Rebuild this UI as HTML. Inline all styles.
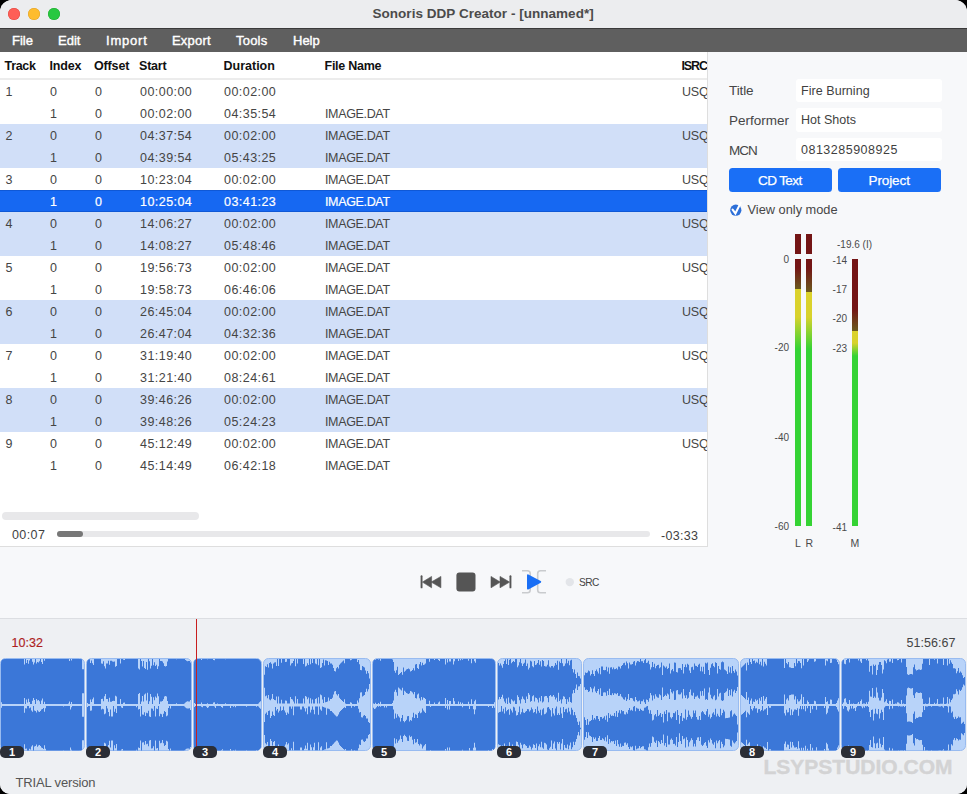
<!DOCTYPE html><html><head><meta charset="utf-8"><style>
*{margin:0;padding:0;box-sizing:border-box}
html,body{width:967px;height:794px;overflow:hidden;background:#000}
body{font-family:"Liberation Sans", sans-serif;position:relative}
.win{position:absolute;left:0;top:0;width:967px;height:794px;border-radius:12px 12px 10px 10px;overflow:hidden;background:#f7f8fa}
.a{position:absolute;white-space:nowrap}
</style></head><body><div class="win"><div class="a" style="left:0;top:0;width:967px;height:28px;background:#ecedef"></div><div class="a" style="left:8px;top:7.6px;width:12px;height:12px;border-radius:50%;background:#fe5f57;box-shadow:inset 0 0 0 0.5px #e2463f"></div><div class="a" style="left:28px;top:7.6px;width:12px;height:12px;border-radius:50%;background:#febc2e;box-shadow:inset 0 0 0 0.5px #e0a126"></div><div class="a" style="left:48px;top:7.6px;width:12px;height:12px;border-radius:50%;background:#28c840;box-shadow:inset 0 0 0 0.5px #1eab2d"></div><div class="a" style="left:372.5px;top:6.87px;font-size:13.5px;line-height:13.5px;color:#4b4b4b;font-weight:bold;letter-spacing:0.03px;">Sonoris DDP Creator - [unnamed*]</div><div class="a" style="left:0;top:28px;width:967px;height:24px;background:#5f5f5f;border-top:1.5px solid #3a3a3a"></div><div class="a" style="left:12px;top:34.20px;font-size:13px;line-height:13px;color:#fff;font-weight:normal;letter-spacing:0px;-webkit-text-stroke:0.4px #fff;">File</div><div class="a" style="left:58px;top:34.20px;font-size:13px;line-height:13px;color:#fff;font-weight:normal;letter-spacing:0px;-webkit-text-stroke:0.4px #fff;">Edit</div><div class="a" style="left:106px;top:34.20px;font-size:13px;line-height:13px;color:#fff;font-weight:normal;letter-spacing:0.8px;-webkit-text-stroke:0.4px #fff;">Import</div><div class="a" style="left:172px;top:34.20px;font-size:13px;line-height:13px;color:#fff;font-weight:normal;letter-spacing:0.2px;-webkit-text-stroke:0.4px #fff;">Export</div><div class="a" style="left:236px;top:34.20px;font-size:13px;line-height:13px;color:#fff;font-weight:normal;letter-spacing:0.2px;-webkit-text-stroke:0.4px #fff;">Tools</div><div class="a" style="left:293px;top:34.20px;font-size:13px;line-height:13px;color:#fff;font-weight:normal;letter-spacing:0px;-webkit-text-stroke:0.4px #fff;">Help</div><div class="a" style="left:0;top:52px;width:708px;height:495px;background:#fff;border-right:1px solid #dedede;border-bottom:1px solid #dedede"></div><div class="a" style="left:4.5px;top:59.62px;font-size:12.5px;line-height:12.5px;color:#111;font-weight:bold;letter-spacing:-0.3px;">Track</div><div class="a" style="left:49.5px;top:59.62px;font-size:12.5px;line-height:12.5px;color:#111;font-weight:bold;letter-spacing:-0.2px;">Index</div><div class="a" style="left:94px;top:59.62px;font-size:12.5px;line-height:12.5px;color:#111;font-weight:bold;letter-spacing:-0.15px;">Offset</div><div class="a" style="left:139px;top:59.62px;font-size:12.5px;line-height:12.5px;color:#111;font-weight:bold;letter-spacing:-0.2px;">Start</div><div class="a" style="left:223.5px;top:59.62px;font-size:12.5px;line-height:12.5px;color:#111;font-weight:bold;letter-spacing:0px;">Duration</div><div class="a" style="left:324.5px;top:59.62px;font-size:12.5px;line-height:12.5px;color:#111;font-weight:bold;letter-spacing:-0.25px;">File Name</div><div class="a" style="left:681.5px;top:59.62px;font-size:12.5px;line-height:12.5px;color:#111;font-weight:bold;letter-spacing:-1.1px;">ISRC</div><div class="a" style="left:0;top:78px;width:707px;height:2px;background:#ececec"></div><div class="a" style="left:5.5px;top:85.62px;font-size:12.5px;line-height:12.5px;color:#454545;font-weight:normal;letter-spacing:0.4px;">1</div><div class="a" style="left:50px;top:85.62px;font-size:12.5px;line-height:12.5px;color:#454545;font-weight:normal;letter-spacing:0.4px;">0</div><div class="a" style="left:95px;top:85.62px;font-size:12.5px;line-height:12.5px;color:#454545;font-weight:normal;letter-spacing:0.4px;">0</div><div class="a" style="left:140px;top:85.62px;font-size:12.5px;line-height:12.5px;color:#454545;font-weight:normal;letter-spacing:0.45px;">00:00:00</div><div class="a" style="left:224px;top:85.62px;font-size:12.5px;line-height:12.5px;color:#454545;font-weight:normal;letter-spacing:0.45px;">00:02:00</div><div class="a" style="left:682px;top:85.62px;font-size:12.5px;line-height:12.5px;color:#454545;font-weight:normal;letter-spacing:-0.2px;">USQ</div><div class="a" style="left:50px;top:107.62px;font-size:12.5px;line-height:12.5px;color:#454545;font-weight:normal;letter-spacing:0.4px;">1</div><div class="a" style="left:95px;top:107.62px;font-size:12.5px;line-height:12.5px;color:#454545;font-weight:normal;letter-spacing:0.4px;">0</div><div class="a" style="left:140px;top:107.62px;font-size:12.5px;line-height:12.5px;color:#454545;font-weight:normal;letter-spacing:0.45px;">00:02:00</div><div class="a" style="left:224px;top:107.62px;font-size:12.5px;line-height:12.5px;color:#454545;font-weight:normal;letter-spacing:0.45px;">04:35:54</div><div class="a" style="left:325px;top:107.62px;font-size:12.5px;line-height:12.5px;color:#454545;font-weight:normal;letter-spacing:-0.35px;">IMAGE.DAT</div><div class="a" style="left:0;top:124px;width:707px;height:22px;background:#d1dff8"></div><div class="a" style="left:5.5px;top:129.62px;font-size:12.5px;line-height:12.5px;color:#454545;font-weight:normal;letter-spacing:0.4px;">2</div><div class="a" style="left:50px;top:129.62px;font-size:12.5px;line-height:12.5px;color:#454545;font-weight:normal;letter-spacing:0.4px;">0</div><div class="a" style="left:95px;top:129.62px;font-size:12.5px;line-height:12.5px;color:#454545;font-weight:normal;letter-spacing:0.4px;">0</div><div class="a" style="left:140px;top:129.62px;font-size:12.5px;line-height:12.5px;color:#454545;font-weight:normal;letter-spacing:0.45px;">04:37:54</div><div class="a" style="left:224px;top:129.62px;font-size:12.5px;line-height:12.5px;color:#454545;font-weight:normal;letter-spacing:0.45px;">00:02:00</div><div class="a" style="left:325px;top:129.62px;font-size:12.5px;line-height:12.5px;color:#454545;font-weight:normal;letter-spacing:-0.35px;">IMAGE.DAT</div><div class="a" style="left:682px;top:129.62px;font-size:12.5px;line-height:12.5px;color:#454545;font-weight:normal;letter-spacing:-0.2px;">USQ</div><div class="a" style="left:0;top:146px;width:707px;height:22px;background:#d1dff8"></div><div class="a" style="left:50px;top:151.62px;font-size:12.5px;line-height:12.5px;color:#454545;font-weight:normal;letter-spacing:0.4px;">1</div><div class="a" style="left:95px;top:151.62px;font-size:12.5px;line-height:12.5px;color:#454545;font-weight:normal;letter-spacing:0.4px;">0</div><div class="a" style="left:140px;top:151.62px;font-size:12.5px;line-height:12.5px;color:#454545;font-weight:normal;letter-spacing:0.45px;">04:39:54</div><div class="a" style="left:224px;top:151.62px;font-size:12.5px;line-height:12.5px;color:#454545;font-weight:normal;letter-spacing:0.45px;">05:43:25</div><div class="a" style="left:325px;top:151.62px;font-size:12.5px;line-height:12.5px;color:#454545;font-weight:normal;letter-spacing:-0.35px;">IMAGE.DAT</div><div class="a" style="left:5.5px;top:173.62px;font-size:12.5px;line-height:12.5px;color:#454545;font-weight:normal;letter-spacing:0.4px;">3</div><div class="a" style="left:50px;top:173.62px;font-size:12.5px;line-height:12.5px;color:#454545;font-weight:normal;letter-spacing:0.4px;">0</div><div class="a" style="left:95px;top:173.62px;font-size:12.5px;line-height:12.5px;color:#454545;font-weight:normal;letter-spacing:0.4px;">0</div><div class="a" style="left:140px;top:173.62px;font-size:12.5px;line-height:12.5px;color:#454545;font-weight:normal;letter-spacing:0.45px;">10:23:04</div><div class="a" style="left:224px;top:173.62px;font-size:12.5px;line-height:12.5px;color:#454545;font-weight:normal;letter-spacing:0.45px;">00:02:00</div><div class="a" style="left:325px;top:173.62px;font-size:12.5px;line-height:12.5px;color:#454545;font-weight:normal;letter-spacing:-0.35px;">IMAGE.DAT</div><div class="a" style="left:682px;top:173.62px;font-size:12.5px;line-height:12.5px;color:#454545;font-weight:normal;letter-spacing:-0.2px;">USQ</div><div class="a" style="left:0;top:190px;width:707px;height:22px;background:#1668f2;box-shadow:inset 0 1px 0 #0f58d6,inset 0 -1px 0 #0f58d6"></div><div class="a" style="left:50px;top:195.62px;font-size:12.5px;line-height:12.5px;color:#fff;font-weight:normal;letter-spacing:0.4px;-webkit-text-stroke:0.2px #fff;">1</div><div class="a" style="left:95px;top:195.62px;font-size:12.5px;line-height:12.5px;color:#fff;font-weight:normal;letter-spacing:0.4px;-webkit-text-stroke:0.2px #fff;">0</div><div class="a" style="left:140px;top:195.62px;font-size:12.5px;line-height:12.5px;color:#fff;font-weight:normal;letter-spacing:0.45px;-webkit-text-stroke:0.2px #fff;">10:25:04</div><div class="a" style="left:224px;top:195.62px;font-size:12.5px;line-height:12.5px;color:#fff;font-weight:normal;letter-spacing:0.45px;-webkit-text-stroke:0.2px #fff;">03:41:23</div><div class="a" style="left:325px;top:195.62px;font-size:12.5px;line-height:12.5px;color:#fff;font-weight:normal;letter-spacing:-0.35px;-webkit-text-stroke:0.2px #fff;">IMAGE.DAT</div><div class="a" style="left:0;top:212px;width:707px;height:22px;background:#d1dff8"></div><div class="a" style="left:5.5px;top:217.62px;font-size:12.5px;line-height:12.5px;color:#454545;font-weight:normal;letter-spacing:0.4px;">4</div><div class="a" style="left:50px;top:217.62px;font-size:12.5px;line-height:12.5px;color:#454545;font-weight:normal;letter-spacing:0.4px;">0</div><div class="a" style="left:95px;top:217.62px;font-size:12.5px;line-height:12.5px;color:#454545;font-weight:normal;letter-spacing:0.4px;">0</div><div class="a" style="left:140px;top:217.62px;font-size:12.5px;line-height:12.5px;color:#454545;font-weight:normal;letter-spacing:0.45px;">14:06:27</div><div class="a" style="left:224px;top:217.62px;font-size:12.5px;line-height:12.5px;color:#454545;font-weight:normal;letter-spacing:0.45px;">00:02:00</div><div class="a" style="left:325px;top:217.62px;font-size:12.5px;line-height:12.5px;color:#454545;font-weight:normal;letter-spacing:-0.35px;">IMAGE.DAT</div><div class="a" style="left:682px;top:217.62px;font-size:12.5px;line-height:12.5px;color:#454545;font-weight:normal;letter-spacing:-0.2px;">USQ</div><div class="a" style="left:0;top:234px;width:707px;height:22px;background:#d1dff8"></div><div class="a" style="left:50px;top:239.62px;font-size:12.5px;line-height:12.5px;color:#454545;font-weight:normal;letter-spacing:0.4px;">1</div><div class="a" style="left:95px;top:239.62px;font-size:12.5px;line-height:12.5px;color:#454545;font-weight:normal;letter-spacing:0.4px;">0</div><div class="a" style="left:140px;top:239.62px;font-size:12.5px;line-height:12.5px;color:#454545;font-weight:normal;letter-spacing:0.45px;">14:08:27</div><div class="a" style="left:224px;top:239.62px;font-size:12.5px;line-height:12.5px;color:#454545;font-weight:normal;letter-spacing:0.45px;">05:48:46</div><div class="a" style="left:325px;top:239.62px;font-size:12.5px;line-height:12.5px;color:#454545;font-weight:normal;letter-spacing:-0.35px;">IMAGE.DAT</div><div class="a" style="left:5.5px;top:261.62px;font-size:12.5px;line-height:12.5px;color:#454545;font-weight:normal;letter-spacing:0.4px;">5</div><div class="a" style="left:50px;top:261.62px;font-size:12.5px;line-height:12.5px;color:#454545;font-weight:normal;letter-spacing:0.4px;">0</div><div class="a" style="left:95px;top:261.62px;font-size:12.5px;line-height:12.5px;color:#454545;font-weight:normal;letter-spacing:0.4px;">0</div><div class="a" style="left:140px;top:261.62px;font-size:12.5px;line-height:12.5px;color:#454545;font-weight:normal;letter-spacing:0.45px;">19:56:73</div><div class="a" style="left:224px;top:261.62px;font-size:12.5px;line-height:12.5px;color:#454545;font-weight:normal;letter-spacing:0.45px;">00:02:00</div><div class="a" style="left:325px;top:261.62px;font-size:12.5px;line-height:12.5px;color:#454545;font-weight:normal;letter-spacing:-0.35px;">IMAGE.DAT</div><div class="a" style="left:682px;top:261.62px;font-size:12.5px;line-height:12.5px;color:#454545;font-weight:normal;letter-spacing:-0.2px;">USQ</div><div class="a" style="left:50px;top:283.62px;font-size:12.5px;line-height:12.5px;color:#454545;font-weight:normal;letter-spacing:0.4px;">1</div><div class="a" style="left:95px;top:283.62px;font-size:12.5px;line-height:12.5px;color:#454545;font-weight:normal;letter-spacing:0.4px;">0</div><div class="a" style="left:140px;top:283.62px;font-size:12.5px;line-height:12.5px;color:#454545;font-weight:normal;letter-spacing:0.45px;">19:58:73</div><div class="a" style="left:224px;top:283.62px;font-size:12.5px;line-height:12.5px;color:#454545;font-weight:normal;letter-spacing:0.45px;">06:46:06</div><div class="a" style="left:325px;top:283.62px;font-size:12.5px;line-height:12.5px;color:#454545;font-weight:normal;letter-spacing:-0.35px;">IMAGE.DAT</div><div class="a" style="left:0;top:300px;width:707px;height:22px;background:#d1dff8"></div><div class="a" style="left:5.5px;top:305.62px;font-size:12.5px;line-height:12.5px;color:#454545;font-weight:normal;letter-spacing:0.4px;">6</div><div class="a" style="left:50px;top:305.62px;font-size:12.5px;line-height:12.5px;color:#454545;font-weight:normal;letter-spacing:0.4px;">0</div><div class="a" style="left:95px;top:305.62px;font-size:12.5px;line-height:12.5px;color:#454545;font-weight:normal;letter-spacing:0.4px;">0</div><div class="a" style="left:140px;top:305.62px;font-size:12.5px;line-height:12.5px;color:#454545;font-weight:normal;letter-spacing:0.45px;">26:45:04</div><div class="a" style="left:224px;top:305.62px;font-size:12.5px;line-height:12.5px;color:#454545;font-weight:normal;letter-spacing:0.45px;">00:02:00</div><div class="a" style="left:325px;top:305.62px;font-size:12.5px;line-height:12.5px;color:#454545;font-weight:normal;letter-spacing:-0.35px;">IMAGE.DAT</div><div class="a" style="left:682px;top:305.62px;font-size:12.5px;line-height:12.5px;color:#454545;font-weight:normal;letter-spacing:-0.2px;">USQ</div><div class="a" style="left:0;top:322px;width:707px;height:22px;background:#d1dff8"></div><div class="a" style="left:50px;top:327.62px;font-size:12.5px;line-height:12.5px;color:#454545;font-weight:normal;letter-spacing:0.4px;">1</div><div class="a" style="left:95px;top:327.62px;font-size:12.5px;line-height:12.5px;color:#454545;font-weight:normal;letter-spacing:0.4px;">0</div><div class="a" style="left:140px;top:327.62px;font-size:12.5px;line-height:12.5px;color:#454545;font-weight:normal;letter-spacing:0.45px;">26:47:04</div><div class="a" style="left:224px;top:327.62px;font-size:12.5px;line-height:12.5px;color:#454545;font-weight:normal;letter-spacing:0.45px;">04:32:36</div><div class="a" style="left:325px;top:327.62px;font-size:12.5px;line-height:12.5px;color:#454545;font-weight:normal;letter-spacing:-0.35px;">IMAGE.DAT</div><div class="a" style="left:5.5px;top:349.62px;font-size:12.5px;line-height:12.5px;color:#454545;font-weight:normal;letter-spacing:0.4px;">7</div><div class="a" style="left:50px;top:349.62px;font-size:12.5px;line-height:12.5px;color:#454545;font-weight:normal;letter-spacing:0.4px;">0</div><div class="a" style="left:95px;top:349.62px;font-size:12.5px;line-height:12.5px;color:#454545;font-weight:normal;letter-spacing:0.4px;">0</div><div class="a" style="left:140px;top:349.62px;font-size:12.5px;line-height:12.5px;color:#454545;font-weight:normal;letter-spacing:0.45px;">31:19:40</div><div class="a" style="left:224px;top:349.62px;font-size:12.5px;line-height:12.5px;color:#454545;font-weight:normal;letter-spacing:0.45px;">00:02:00</div><div class="a" style="left:325px;top:349.62px;font-size:12.5px;line-height:12.5px;color:#454545;font-weight:normal;letter-spacing:-0.35px;">IMAGE.DAT</div><div class="a" style="left:682px;top:349.62px;font-size:12.5px;line-height:12.5px;color:#454545;font-weight:normal;letter-spacing:-0.2px;">USQ</div><div class="a" style="left:50px;top:371.62px;font-size:12.5px;line-height:12.5px;color:#454545;font-weight:normal;letter-spacing:0.4px;">1</div><div class="a" style="left:95px;top:371.62px;font-size:12.5px;line-height:12.5px;color:#454545;font-weight:normal;letter-spacing:0.4px;">0</div><div class="a" style="left:140px;top:371.62px;font-size:12.5px;line-height:12.5px;color:#454545;font-weight:normal;letter-spacing:0.45px;">31:21:40</div><div class="a" style="left:224px;top:371.62px;font-size:12.5px;line-height:12.5px;color:#454545;font-weight:normal;letter-spacing:0.45px;">08:24:61</div><div class="a" style="left:325px;top:371.62px;font-size:12.5px;line-height:12.5px;color:#454545;font-weight:normal;letter-spacing:-0.35px;">IMAGE.DAT</div><div class="a" style="left:0;top:388px;width:707px;height:22px;background:#d1dff8"></div><div class="a" style="left:5.5px;top:393.62px;font-size:12.5px;line-height:12.5px;color:#454545;font-weight:normal;letter-spacing:0.4px;">8</div><div class="a" style="left:50px;top:393.62px;font-size:12.5px;line-height:12.5px;color:#454545;font-weight:normal;letter-spacing:0.4px;">0</div><div class="a" style="left:95px;top:393.62px;font-size:12.5px;line-height:12.5px;color:#454545;font-weight:normal;letter-spacing:0.4px;">0</div><div class="a" style="left:140px;top:393.62px;font-size:12.5px;line-height:12.5px;color:#454545;font-weight:normal;letter-spacing:0.45px;">39:46:26</div><div class="a" style="left:224px;top:393.62px;font-size:12.5px;line-height:12.5px;color:#454545;font-weight:normal;letter-spacing:0.45px;">00:02:00</div><div class="a" style="left:325px;top:393.62px;font-size:12.5px;line-height:12.5px;color:#454545;font-weight:normal;letter-spacing:-0.35px;">IMAGE.DAT</div><div class="a" style="left:682px;top:393.62px;font-size:12.5px;line-height:12.5px;color:#454545;font-weight:normal;letter-spacing:-0.2px;">USQ</div><div class="a" style="left:0;top:410px;width:707px;height:22px;background:#d1dff8"></div><div class="a" style="left:50px;top:415.62px;font-size:12.5px;line-height:12.5px;color:#454545;font-weight:normal;letter-spacing:0.4px;">1</div><div class="a" style="left:95px;top:415.62px;font-size:12.5px;line-height:12.5px;color:#454545;font-weight:normal;letter-spacing:0.4px;">0</div><div class="a" style="left:140px;top:415.62px;font-size:12.5px;line-height:12.5px;color:#454545;font-weight:normal;letter-spacing:0.45px;">39:48:26</div><div class="a" style="left:224px;top:415.62px;font-size:12.5px;line-height:12.5px;color:#454545;font-weight:normal;letter-spacing:0.45px;">05:24:23</div><div class="a" style="left:325px;top:415.62px;font-size:12.5px;line-height:12.5px;color:#454545;font-weight:normal;letter-spacing:-0.35px;">IMAGE.DAT</div><div class="a" style="left:5.5px;top:437.62px;font-size:12.5px;line-height:12.5px;color:#454545;font-weight:normal;letter-spacing:0.4px;">9</div><div class="a" style="left:50px;top:437.62px;font-size:12.5px;line-height:12.5px;color:#454545;font-weight:normal;letter-spacing:0.4px;">0</div><div class="a" style="left:95px;top:437.62px;font-size:12.5px;line-height:12.5px;color:#454545;font-weight:normal;letter-spacing:0.4px;">0</div><div class="a" style="left:140px;top:437.62px;font-size:12.5px;line-height:12.5px;color:#454545;font-weight:normal;letter-spacing:0.45px;">45:12:49</div><div class="a" style="left:224px;top:437.62px;font-size:12.5px;line-height:12.5px;color:#454545;font-weight:normal;letter-spacing:0.45px;">00:02:00</div><div class="a" style="left:325px;top:437.62px;font-size:12.5px;line-height:12.5px;color:#454545;font-weight:normal;letter-spacing:-0.35px;">IMAGE.DAT</div><div class="a" style="left:682px;top:437.62px;font-size:12.5px;line-height:12.5px;color:#454545;font-weight:normal;letter-spacing:-0.2px;">USQ</div><div class="a" style="left:50px;top:459.62px;font-size:12.5px;line-height:12.5px;color:#454545;font-weight:normal;letter-spacing:0.4px;">1</div><div class="a" style="left:95px;top:459.62px;font-size:12.5px;line-height:12.5px;color:#454545;font-weight:normal;letter-spacing:0.4px;">0</div><div class="a" style="left:140px;top:459.62px;font-size:12.5px;line-height:12.5px;color:#454545;font-weight:normal;letter-spacing:0.45px;">45:14:49</div><div class="a" style="left:224px;top:459.62px;font-size:12.5px;line-height:12.5px;color:#454545;font-weight:normal;letter-spacing:0.45px;">06:42:18</div><div class="a" style="left:325px;top:459.62px;font-size:12.5px;line-height:12.5px;color:#454545;font-weight:normal;letter-spacing:-0.35px;">IMAGE.DAT</div><div class="a" style="left:708px;top:52px;width:20px;height:494px;background:#f7f8fa"></div><div class="a" style="left:707px;top:52px;width:1px;height:495px;background:#dedede"></div><div class="a" style="left:2px;top:512px;width:197px;height:8px;border-radius:4px;background:#e8e8ea"></div><div class="a" style="left:12px;top:529.42px;font-size:12.5px;line-height:12.5px;color:#3f3f3f;font-weight:normal;letter-spacing:0.4px;">00:07</div><div class="a" style="left:57px;top:531px;width:593px;height:6px;border-radius:3px;background:#e8e8ea"></div><div class="a" style="left:57px;top:531px;width:26px;height:6px;border-radius:3px;background:#777"></div><div class="a" style="left:661px;top:529.82px;font-size:12.5px;line-height:12.5px;color:#3f3f3f;font-weight:normal;letter-spacing:0.3px;">-03:33</div><div class="a" style="left:729px;top:83.77px;font-size:13.5px;line-height:13.5px;color:#464646;font-weight:normal;letter-spacing:-0.1px;">Title</div><div class="a" style="left:729px;top:113.67px;font-size:13.5px;line-height:13.5px;color:#464646;font-weight:normal;letter-spacing:0px;">Performer</div><div class="a" style="left:729px;top:143.57px;font-size:13.5px;line-height:13.5px;color:#464646;font-weight:normal;letter-spacing:-1.0px;">MCN</div><div class="a" style="left:796px;top:78.5px;width:146px;height:23.3px;background:#fff;border-radius:3px"></div><div class="a" style="left:801px;top:84.52px;font-size:12.5px;line-height:12.5px;color:#3f3f3f;font-weight:normal;letter-spacing:0.05px;">Fire Burning</div><div class="a" style="left:796px;top:108.3px;width:146px;height:23.3px;background:#fff;border-radius:3px"></div><div class="a" style="left:801px;top:114.32px;font-size:12.5px;line-height:12.5px;color:#3f3f3f;font-weight:normal;letter-spacing:0px;">Hot Shots</div><div class="a" style="left:796px;top:138px;width:146px;height:23.3px;background:#fff;border-radius:3px"></div><div class="a" style="left:801px;top:144.02px;font-size:12.5px;line-height:12.5px;color:#3f3f3f;font-weight:normal;letter-spacing:0.5px;">0813285908925</div><div class="a" style="left:729px;top:168px;width:103px;height:23.6px;background:#1a6ff6;border-radius:3.5px"></div><div class="a" style="left:838px;top:168px;width:103px;height:23.6px;background:#1a6ff6;border-radius:3.5px"></div><div class="a" style="left:758px;top:173.77px;font-size:13.5px;line-height:13.5px;color:#fff;font-weight:normal;letter-spacing:-0.6px;-webkit-text-stroke:0.25px #fff;">CD Text</div><div class="a" style="left:868.5px;top:173.77px;font-size:13.5px;line-height:13.5px;color:#fff;font-weight:normal;letter-spacing:-0.1px;-webkit-text-stroke:0.25px #fff;">Project</div><svg class="a" style="left:728px;top:200px" width="16" height="17" viewBox="0 0 16 17"><circle cx="7.8" cy="10.2" r="5.6" fill="#2c6fd8"/><path d="M4.6 9.6 L7.4 13.4 L12.8 2.6" stroke="#fff" stroke-width="2.1" fill="none" stroke-linecap="round"/><path d="M4.9 9.9 L7.4 13 L12.9 2.4" stroke="#2c6fd8" stroke-width="0.9" fill="none" stroke-linecap="round" opacity="0"/></svg><div class="a" style="left:747.5px;top:204.06px;font-size:12.8px;line-height:12.8px;color:#464646;font-weight:normal;letter-spacing:0px;">View only mode</div><div class="a" style="left:795px;top:234px;width:6px;height:19.5px;background:#741515"></div><div class="a" style="left:806px;top:234px;width:6px;height:19.5px;background:#741515"></div><div class="a" style="left:795px;top:259px;width:6px;height:267px;background:linear-gradient(to bottom,#741515 0px,#741515 9px,#6b5a1d 30px,#dcd22b 30px,#d8d22c 58px,#35d334 90px,#35d334 100%)"></div><div class="a" style="left:806px;top:259px;width:6px;height:267px;background:linear-gradient(to bottom,#741515 0px,#741515 9px,#6b5a1d 33px,#dcd22b 33px,#d8d22c 58px,#35d334 90px,#35d334 100%)"></div><div class="a" style="left:852px;top:259px;width:6px;height:267px;background:linear-gradient(to bottom,#741515 0px,#741515 50px,#6b5a1d 72px,#dcd22b 72px,#d8d22c 84px,#35d334 97px,#35d334 100%)"></div><div class="a" style="left:769px;top:254.53px;font-size:10px;line-height:10px;color:#4a4a4a;font-weight:normal;letter-spacing:0px;width:20px;text-align:right;">0</div><div class="a" style="left:769px;top:343.24px;font-size:10px;line-height:10px;color:#4a4a4a;font-weight:normal;letter-spacing:0px;width:20px;text-align:right;">-20</div><div class="a" style="left:769px;top:433.14px;font-size:10px;line-height:10px;color:#4a4a4a;font-weight:normal;letter-spacing:0px;width:20px;text-align:right;">-40</div><div class="a" style="left:769px;top:522.13px;font-size:10px;line-height:10px;color:#4a4a4a;font-weight:normal;letter-spacing:0px;width:20px;text-align:right;">-60</div><div class="a" style="left:827px;top:255.84px;font-size:10px;line-height:10px;color:#4a4a4a;font-weight:normal;letter-spacing:0px;width:20px;text-align:right;">-14</div><div class="a" style="left:827px;top:284.54px;font-size:10px;line-height:10px;color:#4a4a4a;font-weight:normal;letter-spacing:0px;width:20px;text-align:right;">-17</div><div class="a" style="left:827px;top:313.54px;font-size:10px;line-height:10px;color:#4a4a4a;font-weight:normal;letter-spacing:0px;width:20px;text-align:right;">-20</div><div class="a" style="left:827px;top:344.04px;font-size:10px;line-height:10px;color:#4a4a4a;font-weight:normal;letter-spacing:0px;width:20px;text-align:right;">-23</div><div class="a" style="left:827px;top:522.74px;font-size:10px;line-height:10px;color:#4a4a4a;font-weight:normal;letter-spacing:0px;width:20px;text-align:right;">-41</div><div class="a" style="left:837px;top:239.84px;font-size:10px;line-height:10px;color:#4a4a4a;font-weight:normal;letter-spacing:0px;">-19.6 (I)</div><div class="a" style="left:795px;top:537.91px;font-size:10.5px;line-height:10.5px;color:#4a4a4a;font-weight:normal;letter-spacing:0px;">L</div><div class="a" style="left:805.5px;top:537.91px;font-size:10.5px;line-height:10.5px;color:#4a4a4a;font-weight:normal;letter-spacing:0px;">R</div><div class="a" style="left:850.5px;top:537.91px;font-size:10.5px;line-height:10.5px;color:#4a4a4a;font-weight:normal;letter-spacing:0px;">M</div><svg class="a" style="left:415px;top:565px" width="190" height="34" viewBox="415 565 190 34">
<rect x="420.6" y="575.3" width="1.9" height="13" rx="0.9" fill="#555"/>
<path d="M422.4 582.1 L431.6 576.4 L431.6 587.8 Z M431.2 582.1 L440.9 576.4 L440.9 587.8 Z" fill="#555" stroke="#555" stroke-width="0.6" stroke-linejoin="round"/>
<rect x="456.4" y="572.4" width="19.1" height="19" rx="3" fill="#555"/>
<path d="M491 576.4 L500.3 582.1 L491 587.8 Z M500 576.4 L509.6 582.1 L500 587.8 Z" fill="#555" stroke="#555" stroke-width="0.6" stroke-linejoin="round"/>
<rect x="509.5" y="575.3" width="1.9" height="13" rx="0.9" fill="#555"/>
<path d="M522 570.7 H527.4 Q530.2 570.7 530.2 573.5 V590 Q530.2 592.8 527.4 592.8 H522" stroke="#c9cbce" stroke-width="1.6" fill="none"/>
<path d="M546 570.7 H540.5 Q537.7 570.7 537.7 573.5 V590 Q537.7 592.8 540.5 592.8 H546" stroke="#c9cbce" stroke-width="1.6" fill="none"/>
<path d="M527.9 575.2 L540.3 581.9 L527.9 588.6 Z" fill="#1a6ff5" stroke="#1a6ff5" stroke-width="1.8" stroke-linejoin="round"/>
<circle cx="569.8" cy="582.1" r="4.2" fill="#e3e5e9"/>
</svg><div class="a" style="left:579px;top:577.67px;font-size:10.2px;line-height:10.2px;color:#444;font-weight:normal;letter-spacing:-0.6px;">SRC</div><div class="a" style="left:0;top:618px;width:967px;height:176px;background:#eef0f3;border-top:1px solid #dcdee2"></div><div class="a" style="left:11.5px;top:636.62px;font-size:12.5px;line-height:12.5px;color:#ad1e1e;font-weight:normal;letter-spacing:0.05px;-webkit-text-stroke:0.15px #ad1e1e;">10:32</div><div class="a" style="left:906.5px;top:637.22px;font-size:12.5px;line-height:12.5px;color:#444;font-weight:normal;letter-spacing:0.05px;">51:56:67</div><div class="a" style="left:15.5px;top:776.40px;font-size:13px;line-height:13px;color:#555;font-weight:normal;letter-spacing:-0.15px;">TRIAL version</div><div class="a" style="left:763.5px;top:756.22px;font-size:21px;line-height:21px;color:#d3d3d4;font-weight:bold;letter-spacing:0px;-webkit-text-stroke:0.4px #d3d3d4;">LSYPSTUDIO.COM</div><svg class="a" style="left:0;top:619px" width="967" height="146" viewBox="0 619 967 146"><defs><clipPath id="cp0"><rect x="1" y="659" width="83" height="91.5" rx="4"/></clipPath><clipPath id="cp1"><rect x="87" y="659" width="104" height="91.5" rx="4"/></clipPath><clipPath id="cp2"><rect x="194" y="659" width="67" height="91.5" rx="4"/></clipPath><clipPath id="cp3"><rect x="264" y="659" width="106" height="91.5" rx="4"/></clipPath><clipPath id="cp4"><rect x="373" y="659" width="122" height="91.5" rx="4"/></clipPath><clipPath id="cp5"><rect x="498" y="659" width="83" height="91.5" rx="4"/></clipPath><clipPath id="cp6"><rect x="584" y="659" width="154" height="91.5" rx="4"/></clipPath><clipPath id="cp7"><rect x="741" y="659" width="98" height="91.5" rx="4"/></clipPath><clipPath id="cp8"><rect x="842" y="659" width="123" height="91.5" rx="4"/></clipPath></defs><rect x="0.5" y="658.5" width="84" height="92" rx="5" fill="#b8d3f9" stroke="#98bbf0" stroke-width="1"/><path clip-path="url(#cp0)" fill="#3b77d8" d="M0,681.2V663.6H1V660.2H2V658.5H3V658.5H4V658.5H5V658.5H6V658.5H7V658.5H8V658.5H9V658.5H10V658.5H11V658.5H12V658.5H13V658.5H14V658.5H15V658.5H16V658.5H17V658.5H18V658.5H19V658.5H20V658.5H21V658.5H22V658.5H23V658.5H24V664.6H25V658.5H26V663.0H27V659.9H28V663.8H29V660.5H30V658.5H31V658.5H32V661.8H33V664.6H34V662.4H35V658.5H36V663.4H37V662.1H38V662.6H39V661.2H40V658.5H41V662.0H42V664.0H43V658.5H44V660.8H45V658.5H46V658.5H47V658.5H48V658.5H49V658.5H50V658.5H51V658.5H52V658.5H53V658.5H54V658.5H55V658.5H56V658.5H57V658.5H58V658.5H59V658.5H60V658.5H61V658.5H62V658.5H63V658.5H64V658.5H65V658.5H66V658.5H67V658.5H68V659.1H69V661.0H70V658.5H71V660.5H72V658.5H73V658.5H74V658.5H75V658.5H76V658.5H77V658.5H78V658.5H79V658.5H80V658.5H81V658.5H82V669.3H83V669.3H84V658.5H85V681.2V704.0H84V693.2H83V693.2H82V704.0H81V704.0H80V704.0H79V704.0H78V704.0H77V704.0H76V704.0H75V704.0H74V704.0H73V704.0H72V702.0H71V704.0H70V701.5H69V703.4H68V704.0H67V704.0H66V704.0H65V704.0H64V704.0H63V704.0H62V704.0H61V704.0H60V704.0H59V704.0H58V704.0H57V704.0H56V704.0H55V704.0H54V704.0H53V704.0H52V704.0H51V704.0H50V704.0H49V704.0H48V704.0H47V704.0H46V704.0H45V701.7H44V704.0H43V698.5H42V700.5H41V704.0H40V701.3H39V699.9H38V700.4H37V699.1H36V704.0H35V700.1H34V697.9H33V700.7H32V704.0H31V704.0H30V702.0H29V698.7H28V702.6H27V699.5H26V704.0H25V697.9H24V704.0H23V704.0H22V704.0H21V704.0H20V704.0H19V704.0H18V704.0H17V704.0H16V704.0H15V704.0H14V704.0H13V704.0H12V704.0H11V704.0H10V704.0H9V704.0H8V704.0H7V704.0H6V704.0H5V704.0H4V704.0H3V704.0H2V702.3H1V698.9H0ZM0,728.5V711.1H1V707.7H2V706.0H3V706.0H4V706.0H5V706.0H6V706.0H7V706.0H8V706.0H9V706.0H10V706.0H11V706.0H12V706.0H13V706.0H14V706.0H15V706.0H16V706.0H17V706.0H18V706.0H19V706.0H20V706.0H21V706.0H22V706.0H23V706.0H24V712.7H25V708.3H26V708.5H27V706.0H28V706.0H29V708.2H30V707.6H31V710.4H32V711.7H33V706.0H34V710.6H35V710.9H36V712.6H37V710.2H38V711.4H39V712.0H40V711.0H41V709.6H42V708.9H43V708.1H44V711.7H45V708.3H46V706.0H47V706.0H48V706.0H49V706.0H50V706.0H51V706.0H52V706.0H53V706.0H54V706.0H55V706.0H56V706.0H57V706.0H58V706.0H59V706.0H60V706.0H61V706.0H62V706.0H63V706.6H64V706.0H65V706.0H66V706.0H67V706.0H68V706.0H69V706.0H70V709.4H71V707.3H72V706.0H73V706.0H74V706.0H75V706.0H76V706.0H77V706.0H78V706.0H79V706.0H80V706.0H81V706.0H82V716.7H83V716.7H84V706.0H85V728.5V751.0H84V740.3H83V740.3H82V751.0H81V751.0H80V751.0H79V751.0H78V751.0H77V751.0H76V751.0H75V751.0H74V751.0H73V751.0H72V749.7H71V747.6H70V751.0H69V751.0H68V751.0H67V751.0H66V751.0H65V751.0H64V750.4H63V751.0H62V751.0H61V751.0H60V751.0H59V751.0H58V751.0H57V751.0H56V751.0H55V751.0H54V751.0H53V751.0H52V751.0H51V751.0H50V751.0H49V751.0H48V751.0H47V751.0H46V748.7H45V745.3H44V748.9H43V748.1H42V747.4H41V746.0H40V745.0H39V745.6H38V746.8H37V744.4H36V746.1H35V746.4H34V751.0H33V745.3H32V746.6H31V749.4H30V748.8H29V751.0H28V751.0H27V748.5H26V748.7H25V744.3H24V751.0H23V751.0H22V751.0H21V751.0H20V751.0H19V751.0H18V751.0H17V751.0H16V751.0H15V751.0H14V751.0H13V751.0H12V751.0H11V751.0H10V751.0H9V751.0H8V751.0H7V751.0H6V751.0H5V751.0H4V751.0H3V751.0H2V749.3H1V745.9H0Z"/><rect x="86.5" y="658.5" width="105" height="92" rx="5" fill="#b8d3f9" stroke="#98bbf0" stroke-width="1"/><path clip-path="url(#cp1)" fill="#3b77d8" d="M86,681.2V661.9H87V659.6H88V658.5H89V658.5H90V663.1H91V660.6H92V663.3H93V665.1H94V658.5H95V658.5H96V658.5H97V658.5H98V658.5H99V658.5H100V658.5H101V663.6H102V663.8H103V661.3H104V666.3H105V668.5H106V663.4H107V663.6H108V660.8H109V664.8H110V660.8H111V660.8H112V661.6H113V661.8H114V661.6H115V666.8H116V666.0H117V658.5H118V658.5H119V658.5H120V663.4H121V658.5H122V658.5H123V659.8H124V659.9H125V658.5H126V658.5H127V658.5H128V658.5H129V658.5H130V658.5H131V658.5H132V658.5H133V658.5H134V658.5H135V658.5H136V658.5H137V658.5H138V668.6H139V669.4H140V658.5H141V661.0H142V666.4H143V661.0H144V667.9H145V669.1H146V661.9H147V669.7H148V658.5H149V661.2H150V668.6H151V665.8H152V658.5H153V665.2H154V662.2H155V666.1H156V664.8H157V669.1H158V666.3H159V658.5H160V661.0H161V661.0H162V661.4H163V663.3H164V666.1H165V666.4H166V666.1H167V661.4H168V658.5H169V658.5H170V658.5H171V658.5H172V658.5H173V658.5H174V658.5H175V658.5H176V659.2H177V658.5H178V658.5H179V658.5H180V658.5H181V658.5H182V658.5H183V658.5H184V659.0H185V659.9H186V660.8H187V661.2H188V661.0H189V660.9H190V662.5H191V665.9H192V681.2V696.6H191V700.0H190V701.6H189V701.5H188V701.3H187V701.7H186V702.6H185V703.5H184V704.0H183V704.0H182V704.0H181V704.0H180V704.0H179V704.0H178V704.0H177V703.3H176V704.0H175V704.0H174V704.0H173V704.0H172V704.0H171V704.0H170V704.0H169V704.0H168V701.1H167V696.4H166V696.1H165V696.4H164V699.2H163V701.1H162V701.5H161V701.5H160V704.0H159V696.2H158V693.4H157V697.7H156V696.4H155V700.3H154V697.3H153V704.0H152V696.7H151V693.9H150V701.3H149V704.0H148V692.8H147V700.6H146V693.4H145V694.6H144V701.5H143V696.1H142V701.5H141V704.0H140V693.1H139V693.9H138V704.0H137V704.0H136V704.0H135V704.0H134V704.0H133V704.0H132V704.0H131V704.0H130V704.0H129V704.0H128V704.0H127V704.0H126V704.0H125V702.6H124V702.7H123V704.0H122V704.0H121V699.1H120V704.0H119V704.0H118V704.0H117V696.5H116V695.7H115V700.9H114V700.7H113V700.9H112V701.7H111V701.7H110V697.7H109V701.7H108V698.9H107V699.1H106V694.0H105V696.2H104V701.2H103V698.7H102V698.9H101V704.0H100V704.0H99V704.0H98V704.0H97V704.0H96V704.0H95V704.0H94V697.4H93V699.2H92V701.9H91V699.4H90V704.0H89V704.0H88V702.9H87V700.6H86ZM86,728.5V709.4H87V707.1H88V706.0H89V706.0H90V710.7H91V710.4H92V706.0H93V706.0H94V706.0H95V706.0H96V706.0H97V706.0H98V706.0H99V706.0H100V706.0H101V709.5H102V708.7H103V709.3H104V714.2H105V713.5H106V706.0H107V708.4H108V712.1H109V716.3H110V709.6H111V716.5H112V716.5H113V706.0H114V711.7H115V708.8H116V713.0H117V706.0H118V706.0H119V706.0H120V706.0H121V707.5H122V708.0H123V706.0H124V706.0H125V706.0H126V706.0H127V706.0H128V706.0H129V706.0H130V706.0H131V706.0H132V706.0H133V706.0H134V706.0H135V706.0H136V707.3H137V706.0H138V709.4H139V709.1H140V716.4H141V706.0H142V714.5H143V714.7H144V712.2H145V716.0H146V712.8H147V713.3H148V710.7H149V716.5H150V717.0H151V708.5H152V708.7H153V710.7H154V706.0H155V716.6H156V708.5H157V708.9H158V706.0H159V716.3H160V713.8H161V714.2H162V716.9H163V713.7H164V711.0H165V712.1H166V716.3H167V715.6H168V707.9H169V706.0H170V708.4H171V706.0H172V706.0H173V706.0H174V706.0H175V706.0H176V706.0H177V706.0H178V706.0H179V706.0H180V706.0H181V706.0H182V706.0H183V706.0H184V706.5H185V707.4H186V708.2H187V708.6H188V708.5H189V708.3H190V709.9H191V713.3H192V728.5V743.7H191V747.1H190V748.7H189V748.5H188V748.4H187V748.8H186V749.6H185V750.5H184V751.0H183V751.0H182V751.0H181V751.0H180V751.0H179V751.0H178V751.0H177V751.0H176V751.0H175V751.0H174V751.0H173V751.0H172V751.0H171V748.6H170V751.0H169V749.1H168V741.4H167V740.7H166V744.9H165V746.0H164V743.3H163V740.1H162V742.8H161V743.2H160V740.7H159V751.0H158V748.1H157V748.5H156V740.4H155V751.0H154V746.3H153V748.3H152V748.5H151V740.0H150V740.5H149V746.3H148V743.7H147V744.2H146V741.0H145V744.8H144V742.3H143V742.5H142V751.0H141V740.6H140V747.9H139V747.6H138V751.0H137V749.7H136V751.0H135V751.0H134V751.0H133V751.0H132V751.0H131V751.0H130V751.0H129V751.0H128V751.0H127V751.0H126V751.0H125V751.0H124V751.0H123V749.0H122V749.5H121V751.0H120V751.0H119V751.0H118V751.0H117V744.0H116V748.2H115V745.3H114V751.0H113V740.5H112V740.5H111V747.4H110V740.7H109V744.9H108V748.6H107V751.0H106V743.5H105V742.8H104V747.7H103V748.3H102V747.5H101V751.0H100V751.0H99V751.0H98V751.0H97V751.0H96V751.0H95V751.0H94V751.0H93V751.0H92V746.6H91V746.3H90V751.0H89V751.0H88V749.9H87V747.6H86Z"/><rect x="193.5" y="658.5" width="68" height="92" rx="5" fill="#b8d3f9" stroke="#98bbf0" stroke-width="1"/><path clip-path="url(#cp2)" fill="#3b77d8" d="M193,681.2V661.9H194V659.6H195V658.5H196V658.5H197V658.5H198V658.5H199V658.5H200V658.5H201V660.0H202V658.5H203V658.5H204V658.5H205V658.5H206V658.5H207V659.2H208V658.5H209V658.5H210V658.5H211V658.5H212V658.5H213V660.0H214V660.2H215V658.5H216V658.5H217V659.1H218V658.5H219V658.5H220V658.5H221V658.5H222V658.5H223V658.5H224V658.5H225V659.3H226V658.5H227V658.5H228V658.5H229V658.5H230V658.5H231V658.5H232V658.5H233V658.5H234V658.5H235V658.5H236V658.5H237V658.5H238V658.5H239V658.5H240V658.5H241V658.5H242V658.5H243V658.5H244V658.5H245V658.5H246V658.5H247V658.5H248V658.5H249V658.5H250V658.5H251V658.5H252V658.5H253V658.5H254V658.5H255V658.5H256V658.5H257V658.5H258V659.1H259V660.2H260V661.3H261V661.9H262V681.2V700.6H261V701.2H260V702.3H259V703.4H258V704.0H257V704.0H256V704.0H255V704.0H254V704.0H253V704.0H252V704.0H251V704.0H250V704.0H249V704.0H248V704.0H247V704.0H246V704.0H245V704.0H244V704.0H243V704.0H242V704.0H241V704.0H240V704.0H239V704.0H238V704.0H237V704.0H236V704.0H235V704.0H234V704.0H233V704.0H232V704.0H231V704.0H230V704.0H229V704.0H228V704.0H227V704.0H226V703.2H225V704.0H224V704.0H223V704.0H222V704.0H221V704.0H220V704.0H219V704.0H218V703.4H217V704.0H216V704.0H215V702.3H214V702.5H213V704.0H212V704.0H211V704.0H210V704.0H209V704.0H208V703.3H207V704.0H206V704.0H205V704.0H204V704.0H203V704.0H202V702.5H201V704.0H200V704.0H199V704.0H198V704.0H197V704.0H196V704.0H195V702.9H194V700.6H193ZM193,728.5V709.4H194V707.1H195V706.0H196V706.0H197V706.0H198V706.0H199V706.0H200V706.0H201V706.7H202V707.2H203V706.0H204V706.0H205V706.0H206V706.8H207V708.0H208V707.3H209V706.0H210V706.0H211V706.0H212V706.0H213V706.0H214V706.6H215V708.1H216V706.0H217V706.0H218V706.0H219V706.0H220V706.0H221V706.9H222V707.8H223V706.0H224V706.0H225V706.0H226V706.0H227V706.0H228V706.0H229V706.0H230V708.1H231V706.0H232V706.0H233V706.8H234V706.0H235V707.3H236V706.0H237V706.0H238V706.0H239V706.0H240V706.0H241V706.0H242V706.0H243V706.0H244V706.0H245V706.0H246V706.8H247V706.0H248V706.0H249V706.0H250V706.0H251V706.0H252V706.0H253V706.0H254V706.0H255V706.0H256V706.7H257V706.0H258V706.6H259V707.7H260V708.8H261V709.4H262V728.5V747.6H261V748.2H260V749.3H259V750.4H258V751.0H257V750.3H256V751.0H255V751.0H254V751.0H253V751.0H252V751.0H251V751.0H250V751.0H249V751.0H248V751.0H247V750.2H246V751.0H245V751.0H244V751.0H243V751.0H242V751.0H241V751.0H240V751.0H239V751.0H238V751.0H237V751.0H236V749.7H235V751.0H234V750.2H233V751.0H232V751.0H231V748.9H230V751.0H229V751.0H228V751.0H227V751.0H226V751.0H225V751.0H224V751.0H223V749.2H222V750.1H221V751.0H220V751.0H219V751.0H218V751.0H217V751.0H216V748.9H215V750.4H214V751.0H213V751.0H212V751.0H211V751.0H210V751.0H209V749.7H208V749.0H207V750.2H206V751.0H205V751.0H204V751.0H203V749.8H202V750.3H201V751.0H200V751.0H199V751.0H198V751.0H197V751.0H196V751.0H195V749.9H194V747.6H193Z"/><rect x="263.5" y="658.5" width="107" height="92" rx="5" fill="#b8d3f9" stroke="#98bbf0" stroke-width="1"/><path clip-path="url(#cp3)" fill="#3b77d8" d="M263,681.2V670.1H264V674.7H265V666.3H266V667.1H267V664.3H268V667.5H269V662.9H270V662.3H271V663.7H272V668.5H273V663.4H274V662.4H275V662.3H276V665.9H277V659.0H278V666.1H279V659.0H280V659.0H281V662.8H282V659.0H283V659.0H284V659.0H285V662.0H286V661.8H287V659.0H288V659.0H289V659.0H290V665.4H291V663.6H292V663.1H293V661.1H294V659.0H295V666.3H296V659.0H297V663.6H298V659.0H299V659.0H300V659.0H301V659.0H302V659.0H303V664.1H304V659.0H305V666.4H306V665.8H307V663.3H308V664.9H309V659.0H310V664.2H311V659.0H312V662.9H313V659.0H314V659.0H315V663.6H316V664.2H317V659.0H318V665.2H319V659.0H320V667.9H321V667.3H322V662.9H323V659.5H324V665.6H325V660.2H326V660.6H327V661.0H328V664.9H329V661.7H330V663.4H331V663.6H332V664.8H333V668.0H334V671.0H335V671.5H336V668.2H337V667.0H338V668.4H339V664.8H340V663.6H341V662.5H342V661.5H343V660.6H344V663.3H345V658.9H346V658.5H347V658.5H348V658.5H349V658.5H350V660.3H351V659.8H352V658.5H353V658.5H354V658.5H355V658.5H356V658.5H357V661.9H358V659.9H359V664.2H360V669.9H361V670.2H362V666.0H363V666.8H364V667.6H365V670.4H366V673.8H367V671.0H368V673.3H369V678.4H370V681.2H371V681.2V681.2H370V684.1H369V689.2H368V691.5H367V688.7H366V692.1H365V694.9H364V695.7H363V696.5H362V692.3H361V692.6H360V698.3H359V702.6H358V700.6H357V704.0H356V704.0H355V704.0H354V704.0H353V704.0H352V702.7H351V702.2H350V704.0H349V704.0H348V704.0H347V704.0H346V703.6H345V699.2H344V701.9H343V701.0H342V700.0H341V698.9H340V697.7H339V694.1H338V695.5H337V694.3H336V691.0H335V691.5H334V694.5H333V697.7H332V698.9H331V699.1H330V700.8H329V697.6H328V701.5H327V701.9H326V702.3H325V696.9H324V703.0H323V699.6H322V695.2H321V694.6H320V703.5H319V697.3H318V703.5H317V698.3H316V698.9H315V703.5H314V703.5H313V699.6H312V703.5H311V698.3H310V703.5H309V697.6H308V699.2H307V696.7H306V696.1H305V703.5H304V698.4H303V703.5H302V703.5H301V703.5H300V703.5H299V703.5H298V698.9H297V703.5H296V696.2H295V703.5H294V701.4H293V699.4H292V698.9H291V697.1H290V703.5H289V703.5H288V703.5H287V700.7H286V700.5H285V703.5H284V703.5H283V703.5H282V699.7H281V703.5H280V703.5H279V696.4H278V703.5H277V696.6H276V700.2H275V700.1H274V699.1H273V694.0H272V698.8H271V700.2H270V699.6H269V695.0H268V698.2H267V695.4H266V696.2H265V687.8H264V692.4H263ZM263,728.5V717.4H264V722.1H265V713.7H266V712.4H267V715.0H268V711.1H269V710.4H270V718.1H271V715.9H272V711.6H273V715.1H274V716.1H275V707.1H276V710.4H277V709.1H278V712.4H279V710.8H280V706.5H281V710.7H282V709.9H283V706.5H284V710.4H285V712.5H286V715.1H287V712.5H288V713.8H289V706.5H290V706.5H291V708.8H292V706.5H293V715.2H294V706.5H295V706.5H296V706.5H297V706.5H298V706.5H299V706.5H300V709.5H301V709.5H302V706.5H303V706.5H304V708.3H305V711.5H306V708.3H307V714.3H308V706.5H309V706.5H310V712.5H311V709.8H312V706.5H313V709.7H314V714.2H315V706.5H316V706.5H317V706.5H318V714.7H319V706.5H320V709.4H321V710.8H322V706.6H323V707.0H324V707.4H325V707.7H326V714.8H327V708.5H328V708.8H329V709.2H330V711.1H331V711.1H332V712.2H333V713.3H334V714.4H335V715.6H336V716.5H337V716.2H338V714.5H339V712.2H340V711.1H341V709.9H342V709.0H343V708.1H344V707.3H345V707.9H346V706.0H347V706.0H348V706.0H349V706.0H350V706.0H351V707.8H352V706.0H353V706.0H354V706.7H355V706.0H356V706.0H357V706.0H358V708.7H359V712.6H360V712.0H361V717.2H362V717.6H363V715.7H364V715.0H365V715.9H366V718.5H367V718.4H368V721.9H369V722.9H370V728.3H371V728.5V728.7H370V734.1H369V735.1H368V738.6H367V738.5H366V741.1H365V742.0H364V741.3H363V739.4H362V739.8H361V745.0H360V744.4H359V748.3H358V751.0H357V751.0H356V751.0H355V750.3H354V751.0H353V751.0H352V749.2H351V751.0H350V751.0H349V751.0H348V751.0H347V751.0H346V749.1H345V749.7H344V748.9H343V748.0H342V747.1H341V745.9H340V744.8H339V742.5H338V740.8H337V740.5H336V741.4H335V742.6H334V743.7H333V744.8H332V745.9H331V745.9H330V747.8H329V748.2H328V748.5H327V742.2H326V749.3H325V749.6H324V750.0H323V750.4H322V746.2H321V747.6H320V750.5H319V742.3H318V750.5H317V750.5H316V750.5H315V742.8H314V747.3H313V750.5H312V747.2H311V744.5H310V750.5H309V750.5H308V742.7H307V748.7H306V745.5H305V748.7H304V750.5H303V750.5H302V747.5H301V747.5H300V750.5H299V750.5H298V750.5H297V750.5H296V750.5H295V750.5H294V741.8H293V750.5H292V748.2H291V750.5H290V750.5H289V743.2H288V744.5H287V741.9H286V744.5H285V746.6H284V750.5H283V747.1H282V746.3H281V750.5H280V746.2H279V744.6H278V747.9H277V746.6H276V749.9H275V740.9H274V741.9H273V745.4H272V741.1H271V738.9H270V746.6H269V745.9H268V742.0H267V744.6H266V743.3H265V734.9H264V739.6H263Z"/><rect x="372.5" y="658.5" width="123" height="92" rx="5" fill="#b8d3f9" stroke="#98bbf0" stroke-width="1"/><path clip-path="url(#cp4)" fill="#3b77d8" d="M372,681.2V660.2H373V659.1H374V658.5H375V659.8H376V658.5H377V658.5H378V659.4H379V658.5H380V660.8H381V658.5H382V658.5H383V658.5H384V658.5H385V658.5H386V658.5H387V658.5H388V658.5H389V658.5H390V658.5H391V658.5H392V659.5H393V662.1H394V670.8H395V672.8H396V670.2H397V666.8H398V675.0H399V674.1H400V672.9H401V672.0H402V674.7H403V667.4H404V671.7H405V670.7H406V669.4H407V669.0H408V668.6H409V669.3H410V671.4H411V671.1H412V670.1H413V668.3H414V670.6H415V664.6H416V664.1H417V667.9H418V668.9H419V664.2H420V662.0H421V665.6H422V662.8H423V665.0H424V664.5H425V663.5H426V658.5H427V658.5H428V658.5H429V661.7H430V658.5H431V658.5H432V658.5H433V658.5H434V659.9H435V658.5H436V658.5H437V658.5H438V659.9H439V660.9H440V658.5H441V658.5H442V658.5H443V658.5H444V658.5H445V664.5H446V658.5H447V662.4H448V658.5H449V661.5H450V661.4H451V658.5H452V658.5H453V664.6H454V661.3H455V658.5H456V658.5H457V658.5H458V661.1H459V658.5H460V660.3H461V658.5H462V659.8H463V658.5H464V658.5H465V658.5H466V658.5H467V658.5H468V660.7H469V658.5H470V658.5H471V663.3H472V658.5H473V658.5H474V661.2H475V662.8H476V658.5H477V658.5H478V658.5H479V658.5H480V658.5H481V658.5H482V658.5H483V658.5H484V658.5H485V658.5H486V658.5H487V658.5H488V658.5H489V658.5H490V658.5H491V658.5H492V658.5H493V658.5H494V660.2H495V663.6H496V681.2V698.9H495V702.3H494V704.0H493V704.0H492V704.0H491V704.0H490V704.0H489V704.0H488V704.0H487V704.0H486V704.0H485V704.0H484V704.0H483V704.0H482V704.0H481V704.0H480V704.0H479V704.0H478V704.0H477V704.0H476V699.7H475V701.3H474V704.0H473V704.0H472V699.2H471V704.0H470V704.0H469V701.8H468V704.0H467V704.0H466V704.0H465V704.0H464V704.0H463V702.7H462V704.0H461V702.2H460V704.0H459V701.4H458V704.0H457V704.0H456V704.0H455V701.2H454V697.9H453V704.0H452V704.0H451V701.1H450V701.0H449V704.0H448V700.1H447V704.0H446V698.0H445V704.0H444V704.0H443V704.0H442V704.0H441V704.0H440V701.6H439V702.6H438V704.0H437V704.0H436V704.0H435V702.6H434V704.0H433V704.0H432V704.0H431V704.0H430V700.8H429V704.0H428V704.0H427V704.0H426V699.0H425V698.0H424V697.5H423V699.7H422V696.9H421V700.5H420V698.3H419V693.6H418V694.6H417V698.4H416V697.9H415V691.9H414V694.2H413V692.4H412V691.4H411V691.1H410V693.2H409V693.9H408V693.5H407V693.1H406V691.8H405V690.8H404V695.1H403V687.8H402V690.5H401V689.6H400V688.4H399V687.5H398V695.7H397V692.3H396V689.7H395V691.7H394V700.4H393V703.0H392V704.0H391V704.0H390V704.0H389V704.0H388V704.0H387V704.0H386V704.0H385V704.0H384V704.0H383V704.0H382V704.0H381V701.7H380V704.0H379V703.1H378V704.0H377V704.0H376V702.7H375V704.0H374V703.4H373V702.3H372ZM372,728.5V707.7H373V707.7H374V709.1H375V708.4H376V707.2H377V706.0H378V706.8H379V706.0H380V706.7H381V706.0H382V706.0H383V706.0H384V707.5H385V706.0H386V707.5H387V706.0H388V706.0H389V706.0H390V706.0H391V706.0H392V706.0H393V709.6H394V718.7H395V713.6H396V717.7H397V714.2H398V716.3H399V717.6H400V721.4H401V717.9H402V714.9H403V721.0H404V722.2H405V721.1H406V719.7H407V716.2H408V716.1H409V721.5H410V719.9H411V720.8H412V717.2H413V712.8H414V718.0H415V714.2H416V714.8H417V717.9H418V713.1H419V711.6H420V713.3H421V712.4H422V708.4H423V710.5H424V711.8H425V713.0H426V706.0H427V706.0H428V706.0H429V706.0H430V707.0H431V706.0H432V706.0H433V706.0H434V706.0H435V706.0H436V706.0H437V706.0H438V706.0H439V706.0H440V706.0H441V706.0H442V706.0H443V706.0H444V706.0H445V708.1H446V706.0H447V709.6H448V706.0H449V709.4H450V706.0H451V706.0H452V706.0H453V706.0H454V706.0H455V706.0H456V706.0H457V706.0H458V706.0H459V706.0H460V706.0H461V706.0H462V707.2H463V706.0H464V706.0H465V706.0H466V706.0H467V706.0H468V706.0H469V709.1H470V706.0H471V706.0H472V706.0H473V709.3H474V714.2H475V709.6H476V706.0H477V706.0H478V706.0H479V706.0H480V706.0H481V706.0H482V706.0H483V706.0H484V706.0H485V706.0H486V706.0H487V706.0H488V707.0H489V706.0H490V706.0H491V706.0H492V708.1H493V706.0H494V707.7H495V711.1H496V728.5V745.9H495V749.3H494V751.0H493V748.9H492V751.0H491V751.0H490V751.0H489V750.0H488V751.0H487V751.0H486V751.0H485V751.0H484V751.0H483V751.0H482V751.0H481V751.0H480V751.0H479V751.0H478V751.0H477V751.0H476V747.4H475V742.8H474V747.7H473V751.0H472V751.0H471V751.0H470V747.9H469V751.0H468V751.0H467V751.0H466V751.0H465V751.0H464V751.0H463V749.8H462V751.0H461V751.0H460V751.0H459V751.0H458V751.0H457V751.0H456V751.0H455V751.0H454V751.0H453V751.0H452V751.0H451V751.0H450V747.6H449V751.0H448V747.4H447V751.0H446V748.9H445V751.0H444V751.0H443V751.0H442V751.0H441V751.0H440V751.0H439V751.0H438V751.0H437V751.0H436V751.0H435V751.0H434V751.0H433V751.0H432V751.0H431V750.0H430V751.0H429V751.0H428V751.0H427V751.0H426V744.0H425V745.2H424V746.5H423V748.6H422V744.6H421V743.7H420V745.4H419V743.9H418V739.1H417V742.2H416V742.8H415V739.0H414V744.2H413V739.8H412V736.2H411V737.1H410V735.5H409V740.9H408V740.8H407V737.3H406V735.9H405V734.8H404V736.0H403V742.1H402V739.1H401V735.6H400V739.4H399V740.7H398V742.8H397V739.3H396V743.4H395V738.3H394V747.4H393V751.0H392V751.0H391V751.0H390V751.0H389V751.0H388V751.0H387V749.5H386V751.0H385V749.5H384V751.0H383V751.0H382V751.0H381V750.3H380V751.0H379V750.2H378V751.0H377V749.8H376V748.6H375V747.9H374V749.3H373V749.3H372Z"/><rect x="497.5" y="658.5" width="84" height="92" rx="5" fill="#b8d3f9" stroke="#98bbf0" stroke-width="1"/><path clip-path="url(#cp5)" fill="#3b77d8" d="M497,681.2V664.2H498V663.0H499V665.6H500V663.4H501V665.6H502V667.7H503V663.9H504V660.9H505V659.2H506V663.9H507V658.5H508V665.0H509V659.7H510V658.5H511V663.2H512V661.9H513V661.0H514V661.9H515V658.5H516V658.5H517V667.2H518V665.4H519V662.3H520V659.1H521V663.2H522V665.9H523V663.7H524V662.7H525V659.5H526V665.9H527V663.6H528V669.6H529V667.7H530V660.7H531V661.4H532V666.3H533V667.2H534V661.0H535V665.1H536V664.6H537V662.9H538V660.0H539V664.7H540V661.3H541V666.5H542V660.1H543V660.9H544V665.9H545V666.4H546V666.5H547V664.7H548V660.2H549V666.6H550V667.5H551V665.9H552V665.9H553V667.4H554V665.7H555V663.0H556V664.7H557V660.8H558V669.8H559V661.5H560V663.1H561V658.9H562V663.3H563V666.3H564V665.7H565V663.5H566V658.5H567V663.2H568V660.8H569V665.3H570V660.6H571V659.7H572V669.1H573V672.5H574V669.5H575V674.1H576V678.1H577V672.4H578V676.0H579V676.3H580V678.5H581V681.2H582V681.2V681.2H581V684.0H580V686.2H579V686.5H578V690.1H577V684.4H576V688.4H575V693.0H574V690.0H573V693.4H572V702.8H571V701.9H570V697.2H569V701.7H568V699.3H567V704.0H566V699.0H565V696.8H564V696.2H563V699.2H562V703.6H561V699.4H560V701.0H559V692.7H558V701.7H557V697.8H556V699.5H555V696.8H554V695.1H553V696.6H552V696.6H551V695.0H550V695.9H549V702.3H548V697.8H547V696.0H546V696.1H545V696.6H544V701.6H543V702.4H542V696.0H541V701.2H540V697.8H539V702.5H538V699.6H537V697.9H536V697.4H535V701.5H534V695.3H533V696.2H532V701.1H531V701.8H530V694.8H529V692.9H528V698.9H527V696.6H526V703.0H525V699.8H524V698.8H523V696.6H522V699.3H521V703.4H520V700.2H519V697.1H518V695.3H517V704.0H516V704.0H515V700.6H514V701.5H513V700.6H512V699.3H511V704.0H510V702.8H509V697.5H508V704.0H507V698.6H506V703.3H505V701.6H504V698.6H503V694.8H502V696.9H501V699.1H500V696.9H499V699.5H498V698.3H497ZM497,728.5V716.6H498V712.8H499V712.0H500V711.7H501V706.0H502V711.4H503V708.7H504V713.4H505V707.2H506V711.2H507V709.9H508V709.2H509V714.8H510V708.8H511V710.5H512V712.6H513V706.7H514V707.5H515V710.7H516V715.6H517V714.9H518V712.2H519V706.6H520V714.2H521V712.2H522V708.8H523V712.6H524V712.9H525V711.7H526V711.0H527V708.9H528V709.2H529V711.6H530V710.3H531V707.5H532V709.3H533V712.8H534V711.9H535V709.0H536V713.6H537V706.5H538V710.8H539V712.8H540V709.8H541V715.3H542V709.4H543V708.2H544V714.3H545V713.8H546V712.6H547V707.6H548V706.9H549V708.7H550V710.2H551V716.4H552V708.1H553V713.5H554V715.5H555V708.4H556V706.6H557V714.9H558V713.3H559V714.9H560V707.4H561V713.6H562V717.9H563V707.1H564V711.9H565V709.2H566V708.8H567V712.5H568V707.8H569V711.4H570V714.4H571V707.8H572V709.7H573V715.3H574V712.1H575V715.2H576V717.9H577V721.7H578V725.0H579V721.6H580V727.8H581V726.6H582V728.5V730.4H581V729.2H580V735.4H579V732.0H578V735.3H577V739.1H576V741.8H575V744.9H574V741.7H573V747.3H572V749.2H571V742.6H570V745.6H569V749.2H568V744.5H567V748.2H566V747.8H565V745.1H564V749.9H563V739.1H562V743.4H561V749.6H560V742.1H559V743.7H558V742.1H557V750.4H556V748.6H555V741.5H554V743.5H553V748.9H552V740.6H551V746.8H550V748.3H549V750.1H548V749.4H547V744.4H546V743.2H545V742.7H544V748.8H543V747.6H542V741.7H541V747.2H540V744.2H539V746.2H538V750.5H537V743.4H536V748.0H535V745.1H534V744.2H533V747.7H532V749.5H531V746.7H530V745.4H529V747.8H528V748.1H527V746.0H526V745.3H525V744.1H524V744.4H523V748.2H522V744.8H521V742.8H520V750.4H519V744.8H518V742.1H517V741.4H516V746.3H515V749.5H514V750.3H513V744.4H512V746.5H511V748.2H510V742.2H509V747.8H508V747.1H507V745.8H506V749.8H505V743.6H504V748.3H503V745.6H502V751.0H501V745.3H500V745.0H499V744.2H498V740.4H497Z"/><rect x="583.5" y="658.5" width="155" height="92" rx="5" fill="#b8d3f9" stroke="#98bbf0" stroke-width="1"/><path clip-path="url(#cp6)" fill="#3b77d8" d="M583,681.2V670.6H584V675.2H585V672.4H586V672.9H587V672.5H588V670.4H589V671.3H590V675.4H591V673.9H592V670.3H593V673.9H594V675.9H595V670.9H596V669.6H597V671.6H598V673.4H599V668.1H600V674.2H601V666.6H602V666.5H603V669.9H604V670.3H605V670.1H606V666.7H607V671.6H608V667.5H609V673.8H610V667.4H611V667.2H612V669.2H613V667.5H614V669.2H615V669.0H616V668.3H617V669.5H618V666.5H619V666.8H620V668.6H621V666.1H622V665.0H623V663.3H624V662.8H625V665.2H626V661.6H627V663.2H628V668.4H629V662.6H630V664.6H631V664.5H632V664.0H633V661.7H634V660.9H635V665.5H636V662.6H637V661.1H638V661.3H639V662.0H640V658.5H641V661.3H642V661.3H643V662.9H644V660.3H645V658.5H646V663.0H647V662.5H648V660.8H649V664.2H650V669.6H651V667.2H652V662.0H653V667.0H654V663.8H655V668.3H656V666.1H657V665.0H658V664.7H659V668.2H660V667.3H661V662.4H662V675.1H663V665.4H664V666.5H665V667.7H666V666.5H667V668.9H668V668.0H669V663.4H670V673.5H671V670.2H672V668.9H673V671.3H674V662.5H675V662.8H676V671.9H677V672.5H678V668.2H679V667.9H680V668.3H681V670.1H682V663.9H683V673.6H684V667.0H685V664.4H686V667.3H687V663.7H688V664.7H689V670.4H690V672.9H691V667.2H692V666.7H693V669.8H694V663.4H695V665.8H696V666.1H697V667.0H698V664.7H699V663.7H700V671.2H701V666.7H702V671.4H703V666.8H704V674.0H705V662.7H706V663.6H707V662.5H708V669.9H709V675.0H710V667.7H711V664.3H712V663.2H713V665.9H714V667.2H715V662.2H716V662.9H717V673.6H718V666.1H719V668.9H720V669.8H721V662.2H722V661.6H723V662.2H724V669.5H725V670.3H726V671.3H727V673.9H728V666.5H729V672.5H730V667.2H731V673.3H732V666.1H733V671.1H734V672.7H735V669.4H736V671.4H737V675.4H738V675.9H739V681.2V686.6H738V687.1H737V691.1H736V693.1H735V689.8H734V691.4H733V696.4H732V689.2H731V695.3H730V690.0H729V696.0H728V688.6H727V691.2H726V692.2H725V693.0H724V700.3H723V700.9H722V700.3H721V692.7H720V693.6H719V696.4H718V688.9H717V699.6H716V700.3H715V695.3H714V696.6H713V699.3H712V698.2H711V694.8H710V687.5H709V692.6H708V700.0H707V698.9H706V699.8H705V688.5H704V695.7H703V691.1H702V695.8H701V691.3H700V698.8H699V697.8H698V695.5H697V696.4H696V696.7H695V699.1H694V692.7H693V695.8H692V695.3H691V689.6H690V692.1H689V697.8H688V698.8H687V695.2H686V698.1H685V695.5H684V688.9H683V698.6H682V692.4H681V694.2H680V694.6H679V694.3H678V690.0H677V690.6H676V699.7H675V700.0H674V691.2H673V693.6H672V692.3H671V689.0H670V699.1H669V694.5H668V693.6H667V696.0H666V694.8H665V696.0H664V697.1H663V687.4H662V700.1H661V695.2H660V694.3H659V697.8H658V697.5H657V696.4H656V694.2H655V698.7H654V695.5H653V700.5H652V695.3H651V692.9H650V698.3H649V701.7H648V700.0H647V699.5H646V704.0H645V702.2H644V699.6H643V701.2H642V701.2H641V704.0H640V700.5H639V701.2H638V701.4H637V699.9H636V697.0H635V701.6H634V700.8H633V698.5H632V698.0H631V697.9H630V699.9H629V694.1H628V699.3H627V700.9H626V697.3H625V699.7H624V699.2H623V697.5H622V696.4H621V693.9H620V695.7H619V696.0H618V693.0H617V694.2H616V693.5H615V693.3H614V695.0H613V693.3H612V695.3H611V695.1H610V688.7H609V695.0H608V690.9H607V695.8H606V692.4H605V692.2H604V692.6H603V696.0H602V695.9H601V688.3H600V694.4H599V689.1H598V690.9H597V692.9H596V691.6H595V686.6H594V688.6H593V692.2H592V688.6H591V687.1H590V691.2H589V692.1H588V690.0H587V689.6H586V690.1H585V687.3H584V691.9H583ZM583,728.5V722.4H584V717.3H585V720.1H586V725.0H587V719.0H588V724.7H589V721.5H590V721.1H591V720.1H592V714.9H593V719.8H594V718.1H595V719.5H596V715.9H597V715.9H598V718.9H599V720.9H600V716.9H601V716.9H602V718.8H603V717.7H604V716.3H605V719.8H606V715.4H607V721.7H608V713.1H609V717.9H610V714.4H611V715.9H612V715.4H613V715.9H614V713.0H615V716.5H616V711.1H617V716.9H618V712.8H619V710.2H620V713.4H621V710.1H622V711.2H623V711.1H624V714.2H625V714.6H626V712.3H627V713.7H628V710.0H629V707.9H630V710.5H631V709.8H632V710.7H633V706.7H634V706.0H635V711.3H636V707.8H637V708.5H638V708.8H639V711.0H640V708.7H641V709.9H642V710.8H643V710.7H644V707.8H645V707.4H646V706.6H647V706.0H648V709.8H649V713.6H650V710.3H651V714.1H652V720.4H653V719.7H654V715.2H655V714.1H656V716.6H657V709.9H658V716.1H659V714.8H660V713.0H661V717.0H662V714.1H663V722.5H664V711.4H665V714.0H666V710.0H667V721.3H668V712.6H669V712.4H670V717.2H671V718.6H672V717.0H673V712.9H674V713.3H675V711.5H676V720.1H677V710.0H678V715.0H679V723.8H680V716.0H681V713.1H682V720.9H683V717.8H684V718.4H685V709.6H686V719.8H687V717.1H688V710.5H689V714.8H690V716.5H691V718.7H692V716.9H693V710.5H694V713.2H695V710.6H696V716.9H697V719.5H698V719.8H699V716.0H700V720.0H701V712.2H702V711.1H703V712.3H704V714.0H705V715.1H706V711.2H707V709.0H708V716.7H709V714.5H710V718.4H711V717.1H712V713.6H713V712.3H714V714.8H715V708.8H716V716.4H717V713.8H718V715.8H719V717.1H720V708.8H721V715.2H722V713.1H723V709.7H724V711.5H725V718.3H726V718.1H727V718.1H728V717.8H729V717.6H730V711.3H731V710.2H732V716.5H733V714.4H734V713.6H735V714.7H736V715.9H737V724.4H738V725.8H739V728.5V731.2H738V732.6H737V741.1H736V742.3H735V743.4H734V742.6H733V740.5H732V746.8H731V745.7H730V739.4H729V739.2H728V738.9H727V738.9H726V738.7H725V745.5H724V747.3H723V743.9H722V741.8H721V748.2H720V739.9H719V741.2H718V743.2H717V740.6H716V748.2H715V742.2H714V744.7H713V743.4H712V739.9H711V738.6H710V742.5H709V740.3H708V748.0H707V745.8H706V741.9H705V743.0H704V744.7H703V745.9H702V744.8H701V737.0H700V741.0H699V737.2H698V737.5H697V740.1H696V746.4H695V743.8H694V746.5H693V740.1H692V738.3H691V740.5H690V742.2H689V746.5H688V739.9H687V737.2H686V747.4H685V738.6H684V739.2H683V736.1H682V743.9H681V741.0H680V733.2H679V742.0H678V747.0H677V736.9H676V745.5H675V743.7H674V744.1H673V740.0H672V738.4H671V739.8H670V744.6H669V744.4H668V735.7H667V747.0H666V743.0H665V745.6H664V734.5H663V742.9H662V740.0H661V744.0H660V742.2H659V740.9H658V747.1H657V740.4H656V742.9H655V741.8H654V737.3H653V736.6H652V742.9H651V746.7H650V743.4H649V747.2H648V751.0H647V750.4H646V749.6H645V749.2H644V746.3H643V746.2H642V747.1H641V748.3H640V746.0H639V748.2H638V748.5H637V749.2H636V745.7H635V751.0H634V750.3H633V746.3H632V747.2H631V746.5H630V749.1H629V747.0H628V743.3H627V744.7H626V742.4H625V742.8H624V745.9H623V745.8H622V746.9H621V743.6H620V746.8H619V744.2H618V740.1H617V745.9H616V740.5H615V744.0H614V741.1H613V741.6H612V741.1H611V742.6H610V739.1H609V743.9H608V735.3H607V741.6H606V737.2H605V740.7H604V739.3H603V738.2H602V740.1H601V740.1H600V736.1H599V738.1H598V741.1H597V741.1H596V737.5H595V738.9H594V737.2H593V742.1H592V736.9H591V735.9H590V735.5H589V732.3H588V738.0H587V732.0H586V736.9H585V739.7H584V734.6H583Z"/><rect x="740.5" y="658.5" width="99" height="92" rx="5" fill="#b8d3f9" stroke="#98bbf0" stroke-width="1"/><path clip-path="url(#cp7)" fill="#3b77d8" d="M740,681.2V668.3H741V667.4H742V666.5H743V665.6H744V664.6H745V663.2H746V670.4H747V662.5H748V665.0H749V658.5H750V661.9H751V664.0H752V658.5H753V660.9H754V660.6H755V663.2H756V661.7H757V662.7H758V658.5H759V664.2H760V661.8H761V665.6H762V658.5H763V666.6H764V661.8H765V663.8H766V665.6H767V658.5H768V658.5H769V658.5H770V658.5H771V658.5H772V658.5H773V658.5H774V658.5H775V658.5H776V658.5H777V658.5H778V658.5H779V658.5H780V658.5H781V658.5H782V658.5H783V658.5H784V668.1H785V658.5H786V663.0H787V664.2H788V661.9H789V667.3H790V667.5H791V667.9H792V667.9H793V668.0H794V663.1H795V666.3H796V658.5H797V663.3H798V661.1H799V661.2H800V663.0H801V668.2H802V658.5H803V665.6H804V658.5H805V658.5H806V658.5H807V662.0H808V660.4H809V658.5H810V658.5H811V658.5H812V658.5H813V658.5H814V661.8H815V661.3H816V658.5H817V658.5H818V658.5H819V658.5H820V658.5H821V658.5H822V658.5H823V658.5H824V658.5H825V665.4H826V660.6H827V661.2H828V658.5H829V658.5H830V663.1H831V662.7H832V658.5H833V658.5H834V658.5H835V658.5H836V659.6H837V661.9H838V664.2H839V666.5H840V681.2V696.0H839V698.3H838V700.6H837V702.9H836V704.0H835V704.0H834V704.0H833V704.0H832V699.8H831V699.4H830V704.0H829V704.0H828V701.3H827V701.9H826V697.1H825V704.0H824V704.0H823V704.0H822V704.0H821V704.0H820V704.0H819V704.0H818V704.0H817V704.0H816V701.2H815V700.7H814V704.0H813V704.0H812V704.0H811V704.0H810V704.0H809V702.1H808V700.5H807V704.0H806V704.0H805V704.0H804V696.9H803V704.0H802V694.3H801V699.5H800V701.3H799V701.4H798V699.2H797V704.0H796V696.2H795V699.4H794V694.5H793V694.6H792V694.6H791V695.0H790V695.2H789V700.6H788V698.3H787V699.5H786V704.0H785V694.4H784V704.0H783V704.0H782V704.0H781V704.0H780V704.0H779V704.0H778V704.0H777V704.0H776V704.0H775V704.0H774V704.0H773V704.0H772V704.0H771V704.0H770V704.0H769V704.0H768V704.0H767V696.9H766V698.7H765V700.7H764V695.9H763V704.0H762V696.9H761V700.7H760V698.3H759V704.0H758V699.8H757V700.8H756V699.3H755V701.9H754V701.6H753V704.0H752V698.5H751V700.6H750V704.0H749V697.5H748V700.0H747V692.1H746V699.3H745V697.9H744V696.9H743V696.0H742V695.1H741V694.2H740ZM740,728.5V715.7H741V714.8H742V713.9H743V713.0H744V712.1H745V710.7H746V717.2H747V712.3H748V713.4H749V714.7H750V706.0H751V709.0H752V710.4H753V708.2H754V706.0H755V708.4H756V708.3H757V712.7H758V709.3H759V709.1H760V711.2H761V710.1H762V706.0H763V710.8H764V709.5H765V709.3H766V707.9H767V714.9H768V706.0H769V707.8H770V707.8H771V706.0H772V706.0H773V706.0H774V706.0H775V706.0H776V706.0H777V706.0H778V706.0H779V706.0H780V706.0H781V706.0H782V706.0H783V706.0H784V713.2H785V715.6H786V709.8H787V712.5H788V712.2H789V708.0H790V715.3H791V709.4H792V714.9H793V711.4H794V709.6H795V709.5H796V709.9H797V708.3H798V715.7H799V708.7H800V706.0H801V709.2H802V706.0H803V709.3H804V706.0H805V711.2H806V706.0H807V708.2H808V706.0H809V706.0H810V713.0H811V706.0H812V709.3H813V706.0H814V706.0H815V706.0H816V709.7H817V706.0H818V706.0H819V706.0H820V706.0H821V706.0H822V706.0H823V706.0H824V708.0H825V706.0H826V714.3H827V712.8H828V708.6H829V706.0H830V706.0H831V706.0H832V706.0H833V706.0H834V706.0H835V706.0H836V707.1H837V709.4H838V711.6H839V713.9H840V728.5V743.1H839V745.4H838V747.6H837V749.9H836V751.0H835V751.0H834V751.0H833V751.0H832V751.0H831V751.0H830V751.0H829V748.4H828V744.2H827V742.7H826V751.0H825V749.0H824V751.0H823V751.0H822V751.0H821V751.0H820V751.0H819V751.0H818V751.0H817V747.3H816V751.0H815V751.0H814V751.0H813V747.7H812V751.0H811V744.0H810V751.0H809V751.0H808V748.8H807V751.0H806V745.8H805V751.0H804V747.7H803V751.0H802V747.8H801V751.0H800V748.3H799V741.3H798V748.7H797V747.1H796V747.5H795V747.4H794V745.6H793V742.1H792V747.6H791V741.7H790V749.0H789V744.8H788V744.5H787V747.2H786V741.4H785V743.8H784V751.0H783V751.0H782V751.0H781V751.0H780V751.0H779V751.0H778V751.0H777V751.0H776V751.0H775V751.0H774V751.0H773V751.0H772V751.0H771V749.2H770V749.2H769V751.0H768V742.1H767V749.1H766V747.7H765V747.5H764V746.2H763V751.0H762V746.9H761V745.8H760V747.9H759V747.7H758V744.3H757V748.7H756V748.6H755V751.0H754V748.8H753V746.6H752V748.0H751V751.0H750V742.3H749V743.6H748V744.7H747V739.8H746V746.3H745V744.9H744V744.0H743V743.1H742V742.2H741V741.3H740Z"/><rect x="841.5" y="658.5" width="124" height="92" rx="5" fill="#b8d3f9" stroke="#98bbf0" stroke-width="1"/><path clip-path="url(#cp8)" fill="#3b77d8" d="M841,681.2V660.7H842V658.5H843V660.1H844V663.7H845V664.2H846V660.1H847V658.5H848V658.5H849V662.4H850V658.5H851V658.7H852V658.5H853V658.9H854V658.5H855V658.5H856V658.5H857V659.0H858V660.6H859V658.5H860V661.6H861V662.9H862V658.5H863V658.9H864V659.0H865V658.5H866V660.3H867V658.5H868V660.7H869V671.8H870V666.1H871V665.7H872V674.5H873V664.4H874V665.9H875V664.7H876V674.9H877V670.1H878V664.7H879V662.1H880V662.0H881V665.1H882V673.6H883V669.6H884V660.2H885V661.2H886V663.3H887V659.5H888V658.6H889V661.8H890V661.4H891V658.5H892V663.1H893V658.5H894V658.5H895V659.0H896V658.8H897V660.3H898V659.9H899V659.1H900V658.5H901V662.6H902V658.5H903V658.9H904V658.5H905V658.6H906V667.1H907V674.3H908V674.9H909V674.5H910V673.9H911V673.9H912V674.6H913V667.3H914V664.4H915V669.3H916V670.4H917V669.9H918V669.6H919V669.4H920V670.0H921V669.4H922V663.8H923V658.5H924V658.5H925V659.0H926V658.5H927V658.5H928V659.0H929V665.0H930V658.5H931V658.5H932V658.5H933V658.5H934V659.8H935V658.5H936V659.1H937V663.6H938V658.6H939V658.5H940V658.8H941V658.8H942V658.8H943V665.1H944V658.5H945V658.5H946V659.0H947V665.4H948V658.8H949V663.7H950V660.2H951V662.4H952V664.1H953V668.3H954V668.3H955V668.8H956V673.3H957V671.2H958V668.1H959V672.7H960V671.6H961V672.7H962V675.3H963V678.1H964V676.9H965V681.2H966V681.2V681.2H965V685.6H964V684.4H963V687.2H962V689.8H961V690.9H960V689.8H959V694.4H958V691.3H957V689.2H956V693.7H955V694.2H954V694.2H953V698.4H952V700.1H951V702.3H950V698.8H949V703.7H948V697.1H947V703.5H946V704.0H945V704.0H944V697.4H943V703.7H942V703.7H941V703.7H940V704.0H939V703.9H938V698.9H937V703.4H936V704.0H935V702.7H934V704.0H933V704.0H932V704.0H931V704.0H930V697.5H929V703.5H928V704.0H927V704.0H926V703.5H925V704.0H924V704.0H923V698.7H922V693.1H921V692.5H920V693.1H919V692.9H918V692.6H917V692.1H916V693.2H915V698.1H914V695.2H913V687.9H912V688.6H911V688.6H910V688.0H909V687.6H908V688.2H907V695.4H906V703.9H905V704.0H904V703.6H903V704.0H902V699.9H901V704.0H900V703.4H899V702.6H898V702.2H897V703.7H896V703.5H895V704.0H894V704.0H893V699.4H892V704.0H891V701.1H890V700.7H889V703.9H888V703.0H887V699.2H886V701.3H885V702.3H884V692.9H883V688.9H882V697.4H881V700.5H880V700.4H879V697.8H878V692.4H877V687.6H876V697.8H875V696.6H874V698.1H873V688.0H872V696.8H871V696.4H870V690.7H869V701.8H868V704.0H867V702.2H866V704.0H865V703.5H864V703.6H863V704.0H862V699.6H861V700.9H860V704.0H859V701.9H858V703.5H857V704.0H856V704.0H855V704.0H854V703.6H853V704.0H852V703.8H851V704.0H850V700.1H849V704.0H848V704.0H847V702.4H846V698.3H845V698.8H844V702.4H843V704.0H842V701.8H841ZM841,728.5V707.2H842V706.0H843V708.7H844V706.3H845V706.0H846V707.1H847V710.5H848V711.6H849V709.6H850V706.0H851V708.4H852V706.0H853V708.7H854V708.0H855V711.0H856V707.3H857V706.0H858V706.0H859V706.0H860V706.0H861V706.4H862V708.3H863V706.4H864V707.8H865V706.0H866V706.6H867V706.0H868V707.1H869V712.0H870V716.9H871V710.0H872V709.5H873V720.6H874V713.8H875V708.8H876V713.5H877V714.3H878V709.1H879V718.4H880V713.3H881V709.8H882V712.0H883V720.0H884V707.5H885V706.2H886V706.0H887V706.1H888V706.0H889V709.2H890V706.1H891V706.0H892V708.6H893V706.0H894V706.0H895V706.0H896V706.0H897V706.0H898V706.4H899V706.1H900V706.4H901V706.4H902V706.5H903V706.0H904V706.9H905V706.0H906V713.2H907V721.7H908V721.5H909V721.4H910V721.7H911V722.1H912V722.9H913V713.8H914V711.6H915V718.9H916V717.8H917V717.9H918V717.3H919V716.8H920V716.9H921V716.9H922V712.3H923V706.0H924V710.0H925V706.2H926V706.4H927V706.4H928V706.0H929V706.0H930V706.0H931V706.7H932V706.0H933V706.0H934V706.0H935V706.0H936V706.0H937V706.0H938V706.3H939V706.6H940V706.4H941V706.0H942V706.6H943V707.8H944V706.0H945V706.0H946V706.0H947V706.5H948V712.6H949V706.2H950V706.6H951V712.7H952V711.4H953V717.3H954V719.0H955V716.8H956V718.8H957V718.1H958V716.5H959V717.4H960V717.2H961V723.7H962V722.8H963V721.7H964V724.0H965V728.5H966V728.5V728.5H965V733.0H964V735.3H963V734.2H962V733.3H961V739.8H960V739.6H959V740.5H958V738.9H957V738.2H956V740.2H955V738.0H954V739.7H953V745.6H952V744.3H951V750.4H950V750.8H949V744.4H948V750.5H947V751.0H946V751.0H945V751.0H944V749.2H943V750.4H942V751.0H941V750.6H940V750.4H939V750.7H938V751.0H937V751.0H936V751.0H935V751.0H934V751.0H933V751.0H932V750.3H931V751.0H930V751.0H929V751.0H928V750.6H927V750.6H926V750.8H925V747.0H924V751.0H923V744.7H922V740.1H921V740.1H920V740.2H919V739.7H918V739.1H917V739.2H916V738.1H915V745.4H914V743.2H913V734.1H912V734.9H911V735.3H910V735.6H909V735.5H908V735.3H907V743.8H906V751.0H905V750.1H904V751.0H903V750.5H902V750.6H901V750.6H900V750.9H899V750.6H898V751.0H897V751.0H896V751.0H895V751.0H894V751.0H893V748.4H892V751.0H891V750.9H890V747.8H889V751.0H888V750.9H887V751.0H886V750.8H885V749.5H884V737.0H883V745.0H882V747.2H881V743.7H880V738.6H879V747.9H878V742.7H877V743.5H876V748.2H875V743.2H874V736.4H873V747.5H872V747.0H871V740.1H870V745.0H869V749.9H868V751.0H867V750.4H866V751.0H865V749.2H864V750.6H863V748.7H862V750.6H861V751.0H860V751.0H859V751.0H858V751.0H857V749.7H856V746.0H855V749.0H854V748.3H853V751.0H852V748.6H851V751.0H850V747.4H849V745.4H848V746.5H847V749.9H846V751.0H845V750.7H844V748.3H843V751.0H842V749.8H841Z"/><line x1="196.5" y1="619" x2="196.5" y2="752" stroke="#c81e1e" stroke-width="1"/><rect x="0" y="746" width="24" height="12" rx="5" fill="#2b2e36"/><rect x="86" y="746" width="24" height="12" rx="5" fill="#2b2e36"/><rect x="193" y="746" width="24" height="12" rx="5" fill="#2b2e36"/><rect x="263" y="746" width="24" height="12" rx="5" fill="#2b2e36"/><rect x="372" y="746" width="24" height="12" rx="5" fill="#2b2e36"/><rect x="497" y="746" width="24" height="12" rx="5" fill="#2b2e36"/><rect x="583" y="746" width="24" height="12" rx="5" fill="#2b2e36"/><rect x="740" y="746" width="24" height="12" rx="5" fill="#2b2e36"/><rect x="841" y="746" width="24" height="12" rx="5" fill="#2b2e36"/></svg><div class="a" style="left:0px;top:746.69px;font-size:11px;line-height:11px;color:#fff;font-weight:bold;letter-spacing:0px;width:24px;text-align:center;">1</div><div class="a" style="left:86px;top:746.69px;font-size:11px;line-height:11px;color:#fff;font-weight:bold;letter-spacing:0px;width:24px;text-align:center;">2</div><div class="a" style="left:193px;top:746.69px;font-size:11px;line-height:11px;color:#fff;font-weight:bold;letter-spacing:0px;width:24px;text-align:center;">3</div><div class="a" style="left:263px;top:746.69px;font-size:11px;line-height:11px;color:#fff;font-weight:bold;letter-spacing:0px;width:24px;text-align:center;">4</div><div class="a" style="left:372px;top:746.69px;font-size:11px;line-height:11px;color:#fff;font-weight:bold;letter-spacing:0px;width:24px;text-align:center;">5</div><div class="a" style="left:497px;top:746.69px;font-size:11px;line-height:11px;color:#fff;font-weight:bold;letter-spacing:0px;width:24px;text-align:center;">6</div><div class="a" style="left:583px;top:746.69px;font-size:11px;line-height:11px;color:#fff;font-weight:bold;letter-spacing:0px;width:24px;text-align:center;">7</div><div class="a" style="left:740px;top:746.69px;font-size:11px;line-height:11px;color:#fff;font-weight:bold;letter-spacing:0px;width:24px;text-align:center;">8</div><div class="a" style="left:841px;top:746.69px;font-size:11px;line-height:11px;color:#fff;font-weight:bold;letter-spacing:0px;width:24px;text-align:center;">9</div></div></body></html>
